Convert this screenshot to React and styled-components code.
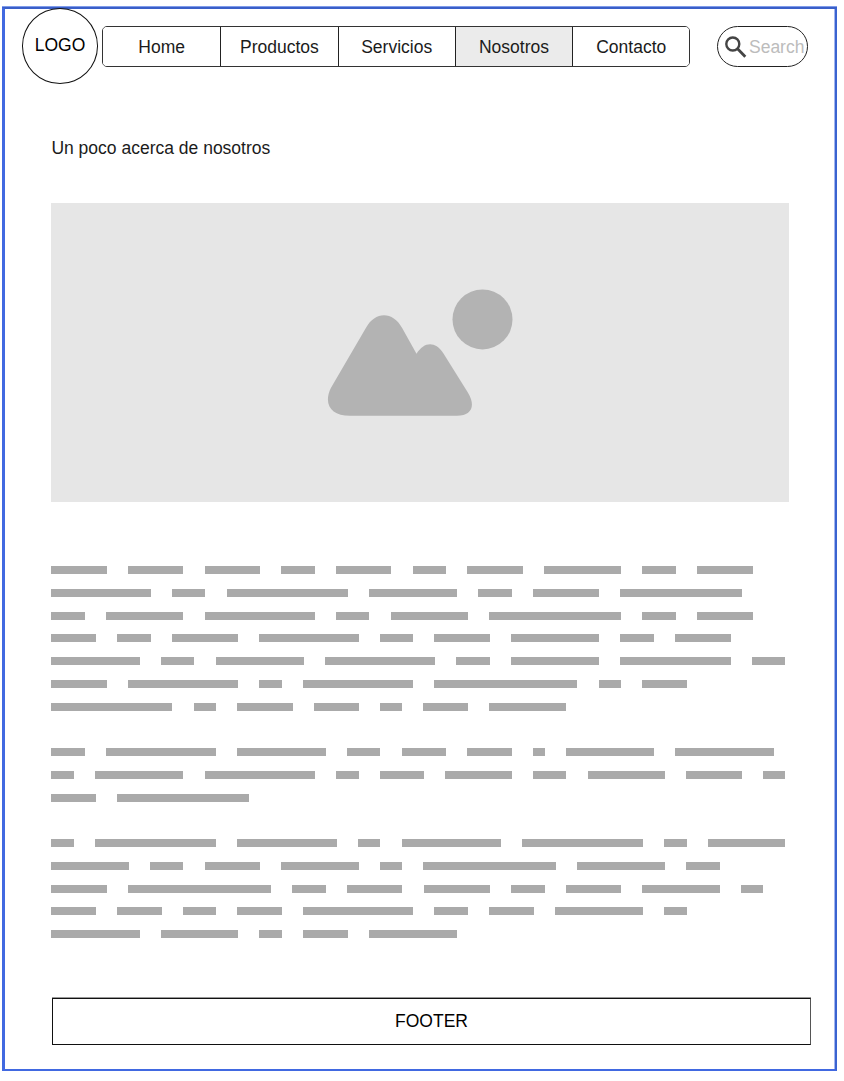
import React from "react";
import styled, { createGlobalStyle } from "styled-components";

const GlobalStyle = createGlobalStyle`
  *, *::before, *::after { box-sizing: border-box; }
  body {
    margin: 0;
    background: #fff;
    color: #1b1b1b;
    font-family: "Liberation Sans", Arial, sans-serif;
    font-size: 17.5px;
    line-height: 20px;
  }
  #root { display: flow-root; }
`;

const Page = styled.div`
  width: 835px;
  height: 1064px;
  margin: 7px 0 0 2px;
  border: 2px solid;
  border-color: #3a5fc8 #3a63d0 #4169e1 #4169e1;
  border-left-width: 3px;
  box-shadow: 0 -1px #7f9bea, 0 1px #9fb3ee, inset -1px 0 #a3b6ef;
  display: flex;
  flex-direction: column;
`;

const Header = styled.header`
  display: flex;
  align-items: flex-start;
  height: 75px;
  padding-left: 17px;
`;

const Logo = styled.div`
  flex: none;
  width: 76px;
  height: 75.5px;
  margin-top: -1px;
  border: 1.4px solid #111;
  border-radius: 50%;
  display: flex;
  align-items: center;
  justify-content: center;
  padding-bottom: 2px;
  color: #000;
`;

const Nav = styled.nav`
  display: grid;
  grid-template-columns: repeat(5, 1fr);
  width: 588.4px;
  height: 41px;
  margin: 17px 0 0 4px;
  border: 1px solid #333;
  border-radius: 5px;
  overflow: hidden;
`;

const NavItem = styled.a`
  display: flex;
  align-items: center;
  justify-content: center;
  background: ${(p) => (p.$active ? "#ebebeb" : "#fff")};
  & + & { border-left: 1px solid #222; }
`;

const Search = styled.div`
  display: flex;
  align-items: center;
  width: 91px;
  height: 41px;
  margin: 17px 0 0 26.6px;
  padding-left: 7px;
  border: 1px solid #222;
  border-radius: 21px;
  color: #bcbcbc;
  white-space: nowrap;
  svg { flex: none; margin-right: 1px; }
`;

const Content = styled.main`
  padding: 54px 42px 0 46.4px;
`;

const Title = styled.p`
  margin: 0;
`;

const Picture = styled.div`
  width: 738px;
  height: 299px;
  margin-top: 45px;
  background: #e6e6e6;
  display: flex;
  align-items: center;
  justify-content: center;
`;

const Copy = styled.div`
  display: flex;
  flex-direction: column;
  gap: 22.75px;
  margin-top: 64px;
`;

const Paragraph = styled.div`
  display: flex;
  flex-direction: column;
`;

const Line = styled.div`
  display: flex;
  gap: 21.19px;
  height: 22.75px;
`;

const Word = styled.span`
  width: ${(p) => p.$letters * 10.945 + 0.7}px;
  height: 8px;
  background: #aaa;
`;

const Footer = styled.footer`
  display: flex;
  align-items: center;
  justify-content: center;
  width: 759px;
  height: 47px;
  margin: 45.25px 0 0 47px;
  padding-bottom: 2px;
  border: 1px solid #111;
  border-right-color: #555;
  box-shadow: 0 -1px #999;
  color: #000;
`;

const links = ["Home", "Productos", "Servicios", "Nosotros", "Contacto"];

const paragraphs = [
  [
    [5, 5, 5, 3, 5, 3, 5, 7, 3, 5],
    [9, 3, 11, 8, 3, 6, 11],
    [3, 7, 10, 3, 7, 12, 3, 5],
    [4, 3, 6, 9, 3, 5, 8, 3, 5],
    [8, 3, 8, 10, 3, 8, 10, 3],
    [5, 10, 2, 10, 13, 2, 4],
    [11, 2, 5, 4, 2, 4, 7],
  ],
  [
    [3, 10, 8, 3, 4, 4, 1, 8, 9],
    [2, 8, 10, 2, 4, 6, 3, 7, 5, 2],
    [4, 12],
  ],
  [
    [2, 11, 9, 2, 9, 11, 2, 7],
    [7, 3, 5, 7, 2, 12, 8, 3],
    [5, 13, 3, 5, 6, 3, 5, 7, 2],
    [4, 4, 3, 4, 10, 3, 4, 8, 2],
    [8, 7, 2, 4, 8],
  ],
];

function SearchIcon() {
  return (
    <svg width="23" height="23" viewBox="0 0 23 23" fill="none" stroke="#444">
      <circle cx="7.8" cy="9" r="6.5" strokeWidth="2.4" />
      <path d="M12.3 13.5L20.3 21.700" strokeWidth="2.8" />
    </svg>
  );
}

function Landscape() {
  return (
    <svg width="186" height="128" viewBox="0 0 186 128" fill="#b3b3b3">
      <circle cx="155.500" cy="30.400" r="30" />
      <path d="M39 38.800C48 22 66 22 75 38.800L89.500 64.800C97 52.800 108 51.800 116 63.800L141 103.800C149 117 144.500 126.800 130 126.800H23C4 126.800-4 115 4 98.800Z" />
    </svg>
  );
}

export default function App() {
  return (
    <>
      <GlobalStyle />
      <Page>
        <Header>
          <Logo>LOGO</Logo>
          <Nav>
            {links.map((label) => (
              <NavItem key={label} $active={label === "Nosotros"}>{label}</NavItem>
            ))}
          </Nav>
          <Search>
            <SearchIcon />
            Search
          </Search>
        </Header>
        <Content>
          <Title>Un poco acerca de nosotros</Title>
          <Picture><Landscape /></Picture>
          <Copy>
            {paragraphs.map((lines, i) => (
              <Paragraph key={i}>
                {lines.map((words, j) => (
                  <Line key={j}>
                    {words.map((n, k) => <Word key={k} $letters={n} />)}
                  </Line>
                ))}
              </Paragraph>
            ))}
          </Copy>
        </Content>
        <Footer>FOOTER</Footer>
      </Page>
    </>
  );
}
